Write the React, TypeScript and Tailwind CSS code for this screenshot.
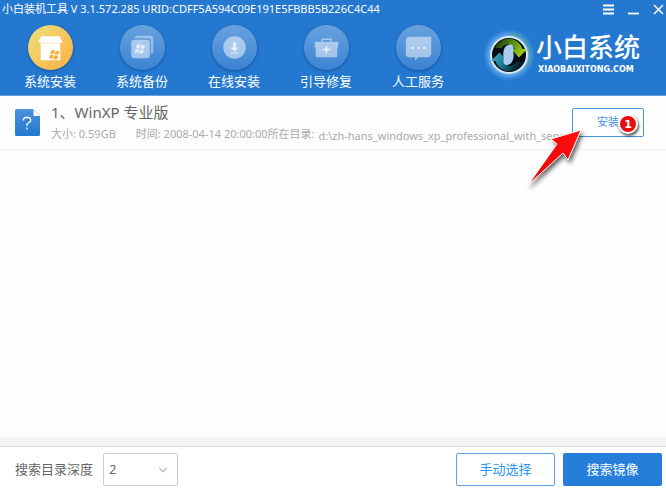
/**
 * Xiaobai install tool
 *
 * Purpose: local system image list with search controls
 */

import { useState } from 'react';
import type { ReactNode } from 'react';
import { ChevronDown } from 'lucide-react';
import clsx from 'clsx';

const WindowsFlag = () => (
  <>
    <path d="M23.600 26.200c1.200-.8 2.500-.8 3.800-.2l-.9 3.800c-1.300-.5-2.600-.5-3.800.2z" />
    <path d="M28.200 26.300c1.300.6 2.700.6 4-.1l-.9 3.800c-1.300.7-2.700.7-4 .1z" />
    <path d="M22.400 30.900c1.200-.7 2.500-.7 3.800-.2l-.9 3.800c-1.300-.5-2.600-.5-3.800.2z" />
    <path d="M27 31c1.300.6 2.700.6 4-.1l-.9 3.800c-1.300.7-2.700.7-4 .1z" />
  </>
);

const InstallIcon = () => (
  <>
    <path d="M13.500 11.500h19l3 6.500h-25z" fill="#fff" />
    <rect x="13" y="17" width="20" height="19" rx="1" fill="#fff" />
    <path d="M13 18.500h20" stroke="#f6dfa8" strokeWidth=".8" />
    <g fill="#fbaf3c">
      <WindowsFlag />
    </g>
  </>
);

const BackupIcon = () => (
  <>
    <path d="M15 13.500a2.500 2.500 0 0 1 2.500-2.500H31a3 3 0 0 1 3 3v13a2.500 2.500 0 0 1-2.500 2.500V16a2.500 2.500 0 0 0-2.500-2.500z" fill="#fff" fillOpacity=".4" />
    <rect x="11.500" y="15" width="19" height="19" rx="3" fill="#fff" fillOpacity=".5" />
    <g fill="#fff" fillOpacity=".65" transform="translate(-6.500 -6)">
      <WindowsFlag />
    </g>
  </>
);

const DownloadIcon = () => (
  <>
    <circle cx="23" cy="23" r="11.500" fill="#fff" fillOpacity=".5" />
    <path d="M21.500 18h3v5h3L23 27l-4.500-4h3z" fill="#fff" fillOpacity=".7" />
    <path d="M19 28.500h8" stroke="#fff" strokeOpacity=".6" strokeWidth="1.200" />
  </>
);

const RepairIcon = () => (
  <>
    <path d="M18.500 17v-2.500h9V17" fill="none" stroke="#fff" strokeOpacity=".5" strokeWidth="1.500" />
    <path d="M11 17h24v6h-1v9a1 1 0 0 1-1 1H13a1 1 0 0 1-1-1v-9h-1z" fill="#fff" fillOpacity=".5" />
    <path d="M23 21.500v7M19.500 25h7" stroke="#fff" strokeOpacity=".8" strokeWidth="1.500" />
  </>
);

const ServiceIcon = () => (
  <>
    <path d="M14 12h22v17a4 4 0 0 1-4 4H22.500L19.500 36.500V33H14a4 4 0 0 1-4-4V16a4 4 0 0 1 4-4z" fill="#fff" fillOpacity=".5" />
    <g fill="#fff" fillOpacity=".8">
      <circle cx="17" cy="23.500" r="1.200" />
      <circle cx="23" cy="23.500" r="1.200" />
      <circle cx="29" cy="23.500" r="1.200" />
    </g>
  </>
);

const navItems: { label: string; icon: ReactNode }[] = [
  { label: '系统安装', icon: <InstallIcon /> },
  { label: '系统备份', icon: <BackupIcon /> },
  { label: '在线安装', icon: <DownloadIcon /> },
  { label: '引导修复', icon: <RepairIcon /> },
  { label: '人工服务', icon: <ServiceIcon /> },
];

const LogoMark = () => (
  <svg viewBox="0 0 52 56" className="h-[56px] w-[52px]" aria-hidden="true">
    <defs>
      <radialGradient id="glow">
        <stop offset=".66" stopColor="#9fd2fb" stopOpacity=".8" />
        <stop offset="1" stopColor="#64b4ff" stopOpacity="0" />
      </radialGradient>
      <linearGradient id="green" x1="0" y1="0" x2="1" y2=".4">
        <stop offset="0" stopColor="#10240c" />
        <stop offset=".45" stopColor="#4a7c14" />
        <stop offset="1" stopColor="#9fca10" />
      </linearGradient>
      <linearGradient id="teal" x1="0" y1="0" x2="1" y2=".4">
        <stop offset="0" stopColor="#3fb2d2" />
        <stop offset=".5" stopColor="#1d7c98" />
        <stop offset="1" stopColor="#06202c" />
      </linearGradient>
    </defs>
    <circle cx="25" cy="29" r="26" fill="url(#glow)" />
    <circle cx="25" cy="29" r="19" fill="#d3e8ee" />
    <path d="M26 7.500a21.500 21.500 0 0 1 16 34.500" fill="none" stroke="#4f9a86" strokeOpacity=".8" strokeWidth="1.800" />
    <circle cx="25" cy="29" r="17" fill="#050d12" />
    <path d="M11 22C16 10 34 9 38.500 23H43l-8 8.500L27 23h4c-3-6-11-6.500-13.500-1z" fill="url(#green)" />
    <path d="M39 36C34 48 16 49 11.500 35H7l8.500-8.500L24 35h-5c3 6 11 6.500 13.500 1z" fill="url(#teal)" />
    <path d="M24 19c4-1.500 6 1 5.500 4-.8 3 .5 4 0 8-.6 5-3 8-6.500 8-3 0-4-2-3.500-4.500.7-3-.5-3.500-.2-7.500.3-4.500 1.800-7 4.700-8z" fill="#a9cdf0" />
  </svg>
);

const FileIcon = () => (
  <svg viewBox="0 0 25 27" className="h-[27px] w-[25px] shrink-0" aria-hidden="true">
    <defs>
      <linearGradient id="file" x1="0" y1="0" x2="0" y2="1">
        <stop offset="0" stopColor="#4b91dc" />
        <stop offset="1" stopColor="#2478cf" />
      </linearGradient>
    </defs>
    <path d="M1.500 0H18l7 7v18.500a1.500 1.500 0 0 1-1.500 1.500h-22A1.500 1.500 0 0 1 0 25.500v-24A1.500 1.500 0 0 1 1.500 0z" fill="url(#file)" />
    <path d="M18.500 1v6H25z" fill="#fff" />
    <path d="M8.500 11.500V10L10 8.500h4l1.500 1.500v2.500L12 15v2M12 18.500v2" fill="none" stroke="#fff" strokeWidth="1.300" />
  </svg>
);

// Red pointer and step number laid over the install button
const StepMarker = () => (
  <div className="pointer-events-none absolute -left-12 top-0" aria-hidden="true">
    <svg viewBox="0 0 64 88" className="h-[88px] w-[64px] drop-shadow-[2px_3px_2px_rgba(0,0,0,0.6)]">
      <defs>
        <linearGradient id="arrow" x1="0" y1="1" x2="1" y2="0">
          <stop offset="0" stopColor="#e00" />
          <stop offset="1" stopColor="#f11" />
        </linearGradient>
      </defs>
      <path d="M4 77L33 36L27 31L57 22L44 52L39 45Z" fill="url(#arrow)" stroke="#fff" strokeWidth="1" />
    </svg>
    <span className="absolute left-[94px] top-1.5 flex size-5 items-center justify-center rounded-full border-2 border-white bg-[#e60d0d] font-['DejaVu_Sans'] text-[11px] font-bold leading-none text-white shadow-[1px_2px_3px_rgba(0,0,0,0.7)]">
      1
    </span>
  </div>
);

export default function App() {
  const [active, setActive] = useState('系统安装');
  const [depth, setDepth] = useState('2');

  return (
    <div className="flex min-h-screen flex-col bg-[#fdfdfd] font-['Noto_Sans','Noto_Sans_CJK_SC',sans-serif] text-[#666]">
      {/* Header */}
      <header className="border-b border-[#69a3df] bg-[#2478cf] text-white">
        <div className="flex h-[18px] items-center justify-between pl-0.5">
          <h1 className="whitespace-nowrap text-[11px] leading-4">
            小白装机工具 V 3.1.572.285 URID:CDFF5A594C09E191E5FBBB5B226C4C44
          </h1>
          <div className="flex items-center gap-3.5 pr-0.5">
            <button type="button" aria-label="菜单">
              <svg viewBox="0 0 11 11" className="size-[11px]">
                <path d="M0 1.500h11M0 5.500h11M0 9.500h11" stroke="#fff" strokeWidth="1.800" />
              </svg>
            </button>
            <button type="button" aria-label="最小化">
              <svg viewBox="0 0 11 11" className="size-[11px]">
                <path d="M0 9.500h11" stroke="#fff" strokeWidth="1.800" />
              </svg>
            </button>
            <button type="button" aria-label="关闭">
              <svg viewBox="0 0 11 11" className="size-[11px]">
                <path d="M1 1l9 9M10 1l-9 9" stroke="#fff" strokeWidth="1.500" />
              </svg>
            </button>
          </div>
        </div>

        <div className="flex h-[77px] items-start justify-between pl-1 pr-[26px]">
          <nav className="flex pt-[7px]">
            {navItems.map((item) => (
              <button
                key={item.label}
                type="button"
                onClick={() => setActive(item.label)}
                className="flex w-[92px] flex-col items-center"
              >
                <span
                  className={clsx(
                    'size-[45px] rounded-full shadow-[0_1px_3px_rgba(0,40,100,0.5)]',
                    active === item.label
                      ? 'bg-linear-to-br from-[#e8e27c] to-[#ffac3e]'
                      : 'bg-linear-to-b from-[#68a2df] to-[#3b83d3]'
                  )}
                >
                  <svg viewBox="0 0 46 46" className="size-full" aria-hidden="true">
                    {item.icon}
                  </svg>
                </span>
                <span className="text-[13px] leading-[22px]">{item.label}</span>
              </button>
            ))}
          </nav>

          <div className="flex shrink-0 items-center pt-2">
            <LogoMark />
            <div className="flex flex-col pt-0.5">
              <span className="text-[26px] font-medium leading-[30px]">小白系统</span>
              <span className="pl-0.5 font-['DejaVu_Sans'] text-[8px] font-bold leading-4">XIAOBAIXITONG.COM</span>
            </div>
          </div>
        </div>
      </header>

      {/* Image list */}
      <main className="flex-1">
        <ul>
          <li className="flex h-[54px] items-center border-b border-[#f0f0f0] pl-[15px] pr-[22px]">
            <FileIcon />
            <div className="min-w-0 flex-1 pl-[11px]">
              <h2 className="text-[15px] leading-6">1、WinXP 专业版</h2>
              <div className="flex items-start whitespace-nowrap text-[11px] leading-5 text-[#aaa]">
                <span className="mr-5">大小: 0.59GB</span>
                <span>时间: 2008-04-14 20:00:00</span>
                <span>所在目录:</span>
                <span className="min-w-0 truncate pl-1 pt-0.5">
                  d:\zh-hans_windows_xp_professional_with_serv...
                </span>
              </div>
            </div>
            <div className="relative shrink-0">
              <button
                type="button"
                className="h-[29px] w-[72px] rounded-xs border border-[#4a92dc] bg-white text-[11px] text-[#3d94e6]"
              >
                安装
              </button>
              <StepMarker />
            </div>
          </li>
        </ul>
      </main>

      {/* Search controls */}
      <footer className="border-t-9 border-[#f3f3f3] bg-white">
        <div className="flex items-center justify-between border-t border-[#dedede] pb-[5px] pl-[15px] pr-1 pt-1.5 text-[13px]">
          <div className="flex items-center gap-2.5">
            <label htmlFor="depth">搜索目录深度</label>
            <div className="relative">
              <select
                id="depth"
                value={depth}
                onChange={(e) => setDepth(e.target.value)}
                className="h-[33px] w-[75px] appearance-none rounded-xs border border-[#ccc] bg-white pl-[5px]"
              >
                <option value="1">1</option>
                <option value="2">2</option>
                <option value="3">3</option>
              </select>
              <ChevronDown className="pointer-events-none absolute right-2 top-2.5 size-3.5 text-[#bbb]" strokeWidth={2} />
            </div>
          </div>
          <div className="flex gap-2">
            <button type="button" className="h-[33px] w-[99px] rounded-xs border border-[#5f9fe2] bg-white text-[#2d94f4]">
              手动选择
            </button>
            <button type="button" className="h-[33px] w-[99px] rounded-xs bg-[#257fda] text-white">
              搜索镜像
            </button>
          </div>
        </div>
      </footer>
    </div>
  );
}
